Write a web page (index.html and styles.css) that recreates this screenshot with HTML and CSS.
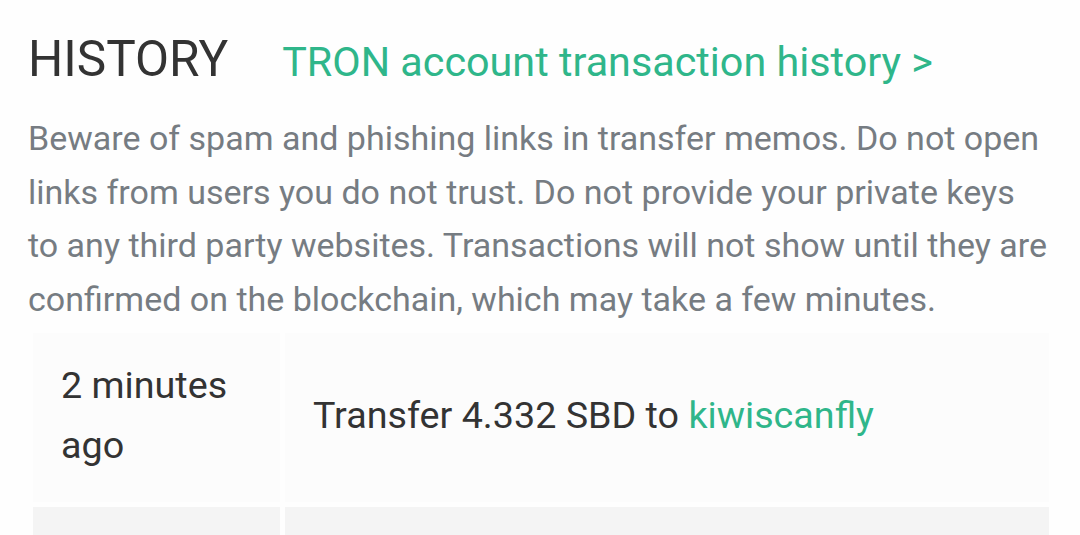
FILE: index.html
```html
<!DOCTYPE html>
<html>
<head>
<meta charset="utf-8">
<link rel="stylesheet" href="styles.css">
</head>
<body>
<div class="page">
  <div class="head">
    <h2 class="title">HISTORY</h2>
    <a class="tron-link" href="#">TRON account transaction history &gt;</a>
  </div>
  <p class="warning">Beware of spam and phishing links in transfer memos. Do not open links from users you do not trust. Do not provide your private keys to any third party websites. Transactions will not show until they are confirmed on the blockchain, which may take a few minutes.</p>
  <table class="history">
    <tbody>
      <tr class="row odd">
        <td class="cell time">2 minutes ago</td>
        <td class="cell op">Transfer 4.332 SBD to <a class="acct" href="#">kiwiscanfly</a></td>
      </tr>
      <tr class="row even">
        <td class="cell time">&nbsp;</td>
        <td class="cell op">&nbsp;</td>
      </tr>
    </tbody>
  </table>
</div>
</body>
</html>
```
FILE: styles.css
```css
html, body {
  margin: 0;
  padding: 0;
  background: #fefefe;
  overflow: hidden;
}
body {
  font-family: Roboto, "Liberation Sans", sans-serif;
  color: #333;
}
.page {
  padding: 29px 26px 0 28px;
}
.head {
  display: flex;
  align-items: baseline;
  gap: 54px;
}
.title {
  margin: 0;
  font-size: 49.5px;
  font-weight: 400;
  line-height: 60px;
  color: #333;
}
.tron-link {
  font-size: 41.3px;
  color: #2fb68a;
  text-decoration: none;
}
.warning {
  margin: 23px 3px 0 0;
  font-size: 34px;
  line-height: 53.5px;
  color: #767c82;
}
.history {
  width: 100%;
  margin: 2px 0 0;
  border-spacing: 5px;
  table-layout: fixed;
}
.cell {
  padding: 22px 28px 27px;
  font-size: 37.7px;
  line-height: 60px;
  vertical-align: middle;
  color: #333;
}
.time {
  width: 191px;
}
.odd .cell {
  background: #fcfcfc;
}
.even .cell {
  background: #f4f4f4;
}
.acct {
  color: #2fb68a;
  text-decoration: none;
}
```
